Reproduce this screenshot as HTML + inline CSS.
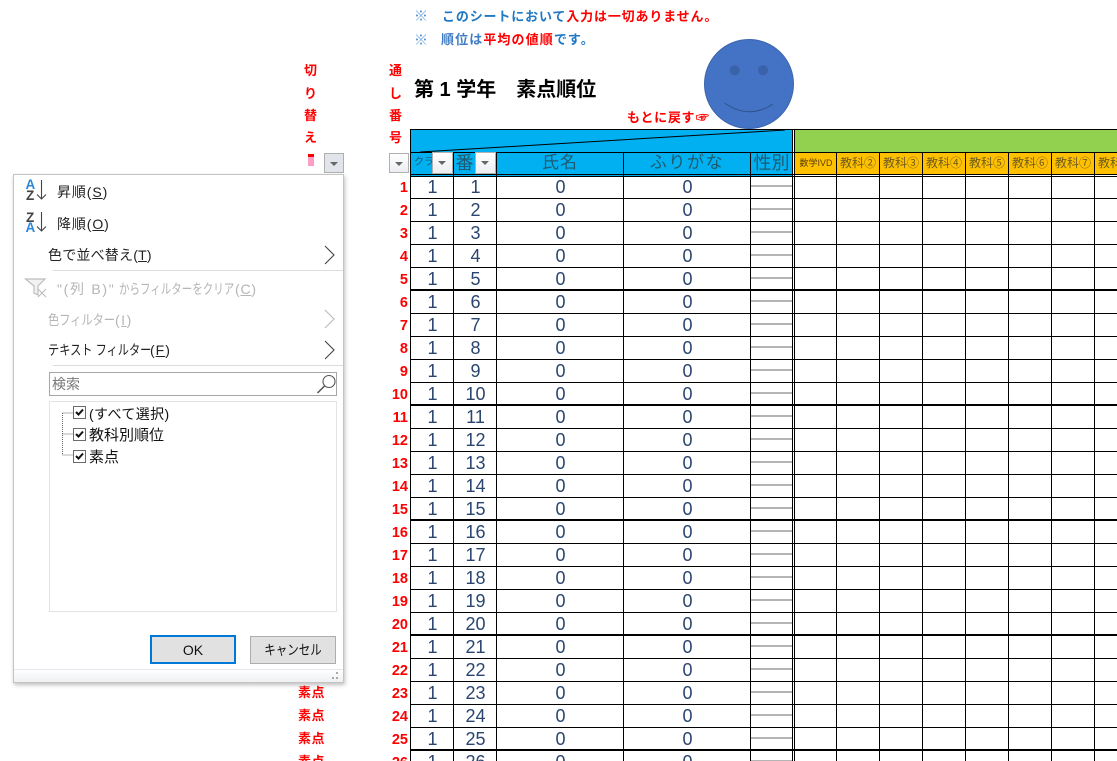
<!DOCTYPE html>
<html lang="ja"><head><meta charset="utf-8"><title>素点順位</title>
<style>
html,body{margin:0;padding:0;background:#fff}
#p{position:relative;width:1117px;height:761px;overflow:hidden;background:#fff;font-family:"Liberation Sans","Noto Sans CJK JP",sans-serif}
#p div,#p span,#p svg{position:absolute}
.t{white-space:nowrap;line-height:1}
.red{color:#f00;font-weight:bold;font-size:13px}
.v{width:1px;background:#000;top:129px;height:632px}
.r{left:410px;width:707px;height:23px;box-sizing:border-box;border-bottom:1px solid #000}
.k{border-bottom-width:2px}
.r::after{content:"";position:absolute;left:341px;width:41px;top:9px;height:2px;background:#b4b4b4}
.r b{position:absolute;right:709px;top:4px;width:30px;text-align:right;color:#f00;font-size:14.5px;line-height:16px}
.r i{position:absolute;font-style:normal;text-align:center;top:0;line-height:23px;font-size:18px;color:#2a4570;font-weight:normal}
.r i:nth-of-type(1){left:1px;width:43px}
.r i:nth-of-type(2){left:44px;width:43px}
.r i:nth-of-type(3){left:87px;width:127px}
.r i:nth-of-type(4){left:214px;width:127px}
.h{top:153px;height:21px;line-height:20px;text-align:center;color:#1f5a70;font-size:18px;white-space:nowrap}
.o{top:153px;height:21px;line-height:21px;font-size:12px;color:#6e5c1c;white-space:nowrap;text-align:center;width:42px}
.dd{width:19px;height:20px;box-sizing:border-box;border:1px solid #b0b0b0;background:linear-gradient(#fff,#eceef2)}
.dd::after{content:"";position:absolute;left:5px;top:8px;border-left:4px solid transparent;border-right:4px solid transparent;border-top:4px solid #666}
.m{font-size:14px;color:#222;white-space:nowrap;line-height:18px}
.n{transform-origin:0 50%}
.g{color:#b5b5b5}
.sep{height:1px;background:#dcdcdc;left:53px;width:290px}
.cb{left:73px;width:11px;height:11px;border:1px solid #6b6b6b;background:#fff}
</style></head><body><div id="p">

<div class="t" style="left:414px;top:9px;font-size:14px;font-weight:bold;color:#5b9bd5">※</div>
<div class="t" style="left:442px;top:10px;font-size:13px;font-weight:bold;letter-spacing:.85px;color:#1f78c4">このシートにおいて<span style="position:static;color:#f00">入力は一切ありません。</span></div>
<div class="t" style="left:414px;top:33px;font-size:14px;font-weight:bold;color:#5b9bd5">※</div>
<div class="t" style="left:441px;top:33px;font-size:13px;font-weight:bold;letter-spacing:1.1px;color:#3f7cc4">順位は<span style="position:static;color:#f00">平均の値順</span><span style="position:static;color:#1f78c4">です。</span></div>

<div class="t red" style="left:304px;top:64px">切</div>
<div class="t red" style="left:304px;top:87px">り</div>
<div class="t red" style="left:304px;top:109px">替</div>
<div class="t red" style="left:304px;top:131px">え</div>
<div class="t red" style="left:389px;top:64px">通</div>
<div class="t red" style="left:389px;top:87px">し</div>
<div class="t red" style="left:389px;top:109px">番</div>
<div class="t red" style="left:389px;top:131px">号</div>
<div style="left:308px;top:154px;width:6px;height:3px;background:#f00"></div>
<div style="left:308px;top:157px;width:6px;height:9px;background:#ff9ec4"></div>

<div class="t" style="left:414px;top:80px;font-size:20px;font-weight:bold;color:#000;white-space:pre">第 1 学年　素点順位</div>
<div class="t red" style="left:627px;top:111px;letter-spacing:.7px">もとに戻す</div>
<div class="t" style="left:696px;top:111px;font-size:13px;color:#f00;-webkit-text-stroke:.4px #f00">☞</div>

<div style="left:410px;top:129px;width:382px;height:23px;background:#00b0f0"></div>
<div style="left:794px;top:129px;width:323px;height:23px;background:#92d050"></div>
<div style="left:410px;top:152px;width:382px;height:24px;background:#00b0f0"></div>
<div style="left:794px;top:152px;width:323px;height:22px;background:#ffc000"></div>
<div style="left:410px;top:129px;width:707px;height:1px;background:#000"></div>
<div style="left:410px;top:152px;width:707px;height:1px;background:#000"></div>
<div style="left:410px;top:174px;width:707px;height:1px;background:#000"></div>
<div style="left:410px;top:176px;width:707px;height:1px;background:#000"></div>

<div class="r" style="top:176px"><b>1</b><i>1</i><i>1</i><i>0</i><i>0</i></div>
<div class="r" style="top:199px"><b>2</b><i>1</i><i>2</i><i>0</i><i>0</i></div>
<div class="r" style="top:222px"><b>3</b><i>1</i><i>3</i><i>0</i><i>0</i></div>
<div class="r" style="top:245px"><b>4</b><i>1</i><i>4</i><i>0</i><i>0</i></div>
<div class="r k" style="top:268px"><b>5</b><i>1</i><i>5</i><i>0</i><i>0</i></div>
<div class="r" style="top:291px"><b>6</b><i>1</i><i>6</i><i>0</i><i>0</i></div>
<div class="r" style="top:314px"><b>7</b><i>1</i><i>7</i><i>0</i><i>0</i></div>
<div class="r" style="top:337px"><b>8</b><i>1</i><i>8</i><i>0</i><i>0</i></div>
<div class="r" style="top:360px"><b>9</b><i>1</i><i>9</i><i>0</i><i>0</i></div>
<div class="r k" style="top:383px"><b>10</b><i>1</i><i>10</i><i>0</i><i>0</i></div>
<div class="r" style="top:406px"><b>11</b><i>1</i><i>11</i><i>0</i><i>0</i></div>
<div class="r" style="top:429px"><b>12</b><i>1</i><i>12</i><i>0</i><i>0</i></div>
<div class="r" style="top:452px"><b>13</b><i>1</i><i>13</i><i>0</i><i>0</i></div>
<div class="r" style="top:475px"><b>14</b><i>1</i><i>14</i><i>0</i><i>0</i></div>
<div class="r k" style="top:498px"><b>15</b><i>1</i><i>15</i><i>0</i><i>0</i></div>
<div class="r" style="top:521px"><b>16</b><i>1</i><i>16</i><i>0</i><i>0</i></div>
<div class="r" style="top:544px"><b>17</b><i>1</i><i>17</i><i>0</i><i>0</i></div>
<div class="r" style="top:567px"><b>18</b><i>1</i><i>18</i><i>0</i><i>0</i></div>
<div class="r" style="top:590px"><b>19</b><i>1</i><i>19</i><i>0</i><i>0</i></div>
<div class="r k" style="top:613px"><b>20</b><i>1</i><i>20</i><i>0</i><i>0</i></div>
<div class="r" style="top:636px"><b>21</b><i>1</i><i>21</i><i>0</i><i>0</i></div>
<div class="r" style="top:659px"><b>22</b><i>1</i><i>22</i><i>0</i><i>0</i></div>
<div class="r" style="top:682px"><b>23</b><i>1</i><i>23</i><i>0</i><i>0</i></div>
<div class="r" style="top:705px"><b>24</b><i>1</i><i>24</i><i>0</i><i>0</i></div>
<div class="r k" style="top:728px"><b>25</b><i>1</i><i>25</i><i>0</i><i>0</i></div>
<div class="r" style="top:751px"><b>26</b><i>1</i><i>26</i><i>0</i><i>0</i></div>

<div class="v" style="left:410px"></div>
<div class="v" style="left:453px;top:152px;height:609px"></div>
<div class="v" style="left:496px;top:152px;height:609px"></div>
<div class="v" style="left:623px;top:152px;height:609px"></div>
<div class="v" style="left:750px;top:152px;height:609px"></div>
<div class="v" style="left:792px"></div>
<div class="v" style="left:794px"></div>
<div class="v" style="left:836px;top:152px;height:609px"></div>
<div class="v" style="left:879px;top:152px;height:609px"></div>
<div class="v" style="left:922px;top:152px;height:609px"></div>
<div class="v" style="left:965px;top:152px;height:609px"></div>
<div class="v" style="left:1008px;top:152px;height:609px"></div>
<div class="v" style="left:1051px;top:152px;height:609px"></div>
<div class="v" style="left:1094px;top:152px;height:609px"></div>

<div class="h" style="left:411px;width:21px;font-size:10px;overflow:hidden;text-align:left;padding-left:3px;box-sizing:border-box">クラ</div>
<div class="dd" style="left:432px;top:152px;width:21px;height:22px"></div>
<div class="h" style="left:454px;width:21px;font-size:18px">番</div>
<div class="dd" style="left:475px;top:152px;width:21px;height:22px"></div>
<div class="h" style="left:497px;width:126px;font-size:17px;letter-spacing:1px">氏名</div>
<div class="h" style="left:624px;width:126px;font-size:17px;letter-spacing:1.6px">ふりがな</div>
<div class="h" style="left:751px;width:41px">性別</div>

<div class="o" style="left:795px;font-size:9px;color:#5b4200">数学IVD</div>
<div class="o" style="left:837px">教科②</div>
<div class="o" style="left:880px">教科③</div>
<div class="o" style="left:923px">教科④</div>
<div class="o" style="left:966px">教科⑤</div>
<div class="o" style="left:1009px">教科⑥</div>
<div class="o" style="left:1052px">教科⑦</div>
<div class="o" style="left:1095px;text-align:left;padding-left:3px;width:22px;overflow:hidden">教科⑧</div>

<svg style="left:410px;top:125px" width="390" height="30" viewBox="0 0 390 30"><path d="M10 27 L375 5" stroke="#000" stroke-width="1" fill="none"/></svg>

<svg style="left:700px;top:36px" width="100" height="96" viewBox="700 36 100 96">
<circle cx="749" cy="84" r="44.5" fill="#4472c4" stroke="#3b66ae" stroke-width="1"/>
<circle cx="734.7" cy="70.3" r="5" fill="#3a62a8"/><circle cx="763" cy="70.3" r="5" fill="#3a62a8"/>
<path d="M724.5 103 Q749 120 773 104" fill="none" stroke="#2f528f" stroke-width="1"/>
</svg>

<div class="dd" style="left:389px;top:153px;width:20px"></div>
<div class="dd" style="left:324px;top:153px;width:20px;background:#e1e4ea"></div>

<div class="t red" style="left:298px;top:686px;letter-spacing:.5px">素点</div>
<div class="t red" style="left:298px;top:709px;letter-spacing:.5px">素点</div>
<div class="t red" style="left:298px;top:732px;letter-spacing:.5px">素点</div>
<div class="t red" style="left:298px;top:755px;letter-spacing:.5px">素点</div>

<!-- filter panel -->
<div style="left:13px;top:174px;width:331px;height:509px;box-sizing:border-box;background:#fff;border:1px solid #c4c4c4;box-shadow:1px 2px 4px rgba(0,0,0,.25)"></div>

<svg style="left:24px;top:178px" width="26" height="130" viewBox="0 0 26 130">
<text x="1.500" y="11" font-family="Liberation Sans" font-size="13.500" font-weight="bold" fill="#2b88d8">A</text>
<text x="2" y="22" font-family="Liberation Sans" font-size="13.500" font-weight="bold" fill="#444">Z</text>
<path d="M17.500 2V21M13 16.500l4.500 4.500 4.500-4.500" fill="none" stroke="#444" stroke-width="1.100"/>
<text x="2" y="44" font-family="Liberation Sans" font-size="13.500" font-weight="bold" fill="#444">Z</text>
<text x="1.500" y="54" font-family="Liberation Sans" font-size="13.500" font-weight="bold" fill="#2b88d8">A</text>
<path d="M17.500 34V53M13 48.500l4.500 4.500 4.500-4.500" fill="none" stroke="#444" stroke-width="1.100"/>
<path d="M1.500 101H21L14 108V117L10 115V108Z" fill="#f2f2f2" stroke="#bdbdbd" stroke-width="1.200"/>
<path d="M14 111l8 8M22 111l-8 8" stroke="#bdbdbd" stroke-width="1.100"/>
</svg>

<div class="m" style="left:57px;top:183px;letter-spacing:.9px">昇順(<u>S</u>)</div>
<div class="m" style="left:57px;top:215px;letter-spacing:.9px">降順(<u>O</u>)</div>
<div class="m" style="left:48px;top:246px;letter-spacing:.2px">色で並べ替え(<u>T</u>)</div>
<div class="sep" style="top:270px"></div>
<div class="m g" style="left:57px;top:280px;letter-spacing:1.7px">"(列 B)"</div>
<div class="m g n" style="left:119px;top:280px;transform:scaleX(.75)">からフィルターをクリア</div>
<div class="m g" style="left:235px;top:280px;letter-spacing:.8px">(<u>C</u>)</div>
<div class="m g n" style="left:48px;top:311px;transform:scaleX(.8)">色フィルター</div>
<div class="m g" style="left:115px;top:311px;letter-spacing:1.5px">(<u>I</u>)</div>
<div class="m n" style="left:48px;top:341px;transform:scaleX(.8)">テキスト フィルター</div>
<div class="m" style="left:150px;top:341px;letter-spacing:1px">(<u>F</u>)</div>
<div class="sep" style="top:365px"></div>

<svg style="left:322px;top:244px" width="16" height="116" viewBox="0 0 16 116" fill="none">
<path d="M3 2l9 9-9 9" stroke="#444" stroke-width="1.100"/>
<path d="M3 66l9 9-9 9" stroke="#bbb" stroke-width="1.100"/>
<path d="M3 97l9 9-9 9" stroke="#444" stroke-width="1.100"/>
</svg>

<div style="left:49px;top:372px;width:288px;height:24px;box-sizing:border-box;border:1px solid #a6a6a6;background:#fff"></div>
<div class="m" style="left:52px;top:375px;color:#777">検索</div>
<svg style="left:316px;top:373px" width="21" height="22" viewBox="0 0 21 22" fill="none" stroke="#555"><circle cx="13" cy="8.500" r="6" stroke-width="1.100"/><path d="M8.500 13 L1.500 20" stroke-width="1.500"/></svg>

<div style="left:49px;top:401px;width:288px;height:211px;box-sizing:border-box;border:1px solid #e3e3e3;background:#fff"></div>
<svg style="left:60px;top:410px" width="14" height="50" viewBox="0 0 14 50" fill="none"><path d="M2.500 3V45M2.500 3H13M2.500 24H13M2.500 45H13" stroke="#666" stroke-dasharray="1 1"/></svg>
<div class="cb" style="top:406px"></div><div class="cb" style="top:428px"></div><div class="cb" style="top:450px"></div>
<svg style="left:73px;top:406px" width="13" height="57" viewBox="0 0 13 57" fill="none" stroke="#111" stroke-width="2"><path d="M3 6l2.500 2.500L10 3.500M3 28l2.500 2.500L10 25.500M3 50l2.500 2.500L10 47.500"/></svg>
<div class="m" style="left:89px;top:405px;color:#111;letter-spacing:.4px">(すべて選択)</div>
<div class="m" style="left:89px;top:427px;color:#111;font-size:15px">教科別順位</div>
<div class="m" style="left:89px;top:449px;color:#111;font-size:15px">素点</div>

<div style="left:150px;top:635px;width:86px;height:29px;box-sizing:border-box;border:2px solid #0078d7;background:#e1e1e1;text-align:center;font-size:14px;line-height:26px;color:#111">OK</div>
<div style="left:250px;top:636px;width:86px;height:28px;box-sizing:border-box;border:1px solid #adadad;background:#e1e1e1"></div>
<div style="left:250px;top:637px;width:86px;height:26px;text-align:center;font-size:14px;line-height:26px;color:#111;white-space:nowrap;transform:scaleX(.82)">キャンセル</div>

<div style="left:14px;top:669px;width:329px;height:13px;border-top:1px solid #e3e8ee;box-sizing:border-box;background:linear-gradient(#fff,#eef0f3)"></div>
<svg style="left:331px;top:671px" width="11" height="10" viewBox="0 0 11 10" fill="#a8a8a8"><rect x="5" y="1" width="2" height="2"/><rect x="1" y="6" width="2" height="2"/><rect x="5" y="6" width="2" height="2"/></svg>

</div></body></html>
